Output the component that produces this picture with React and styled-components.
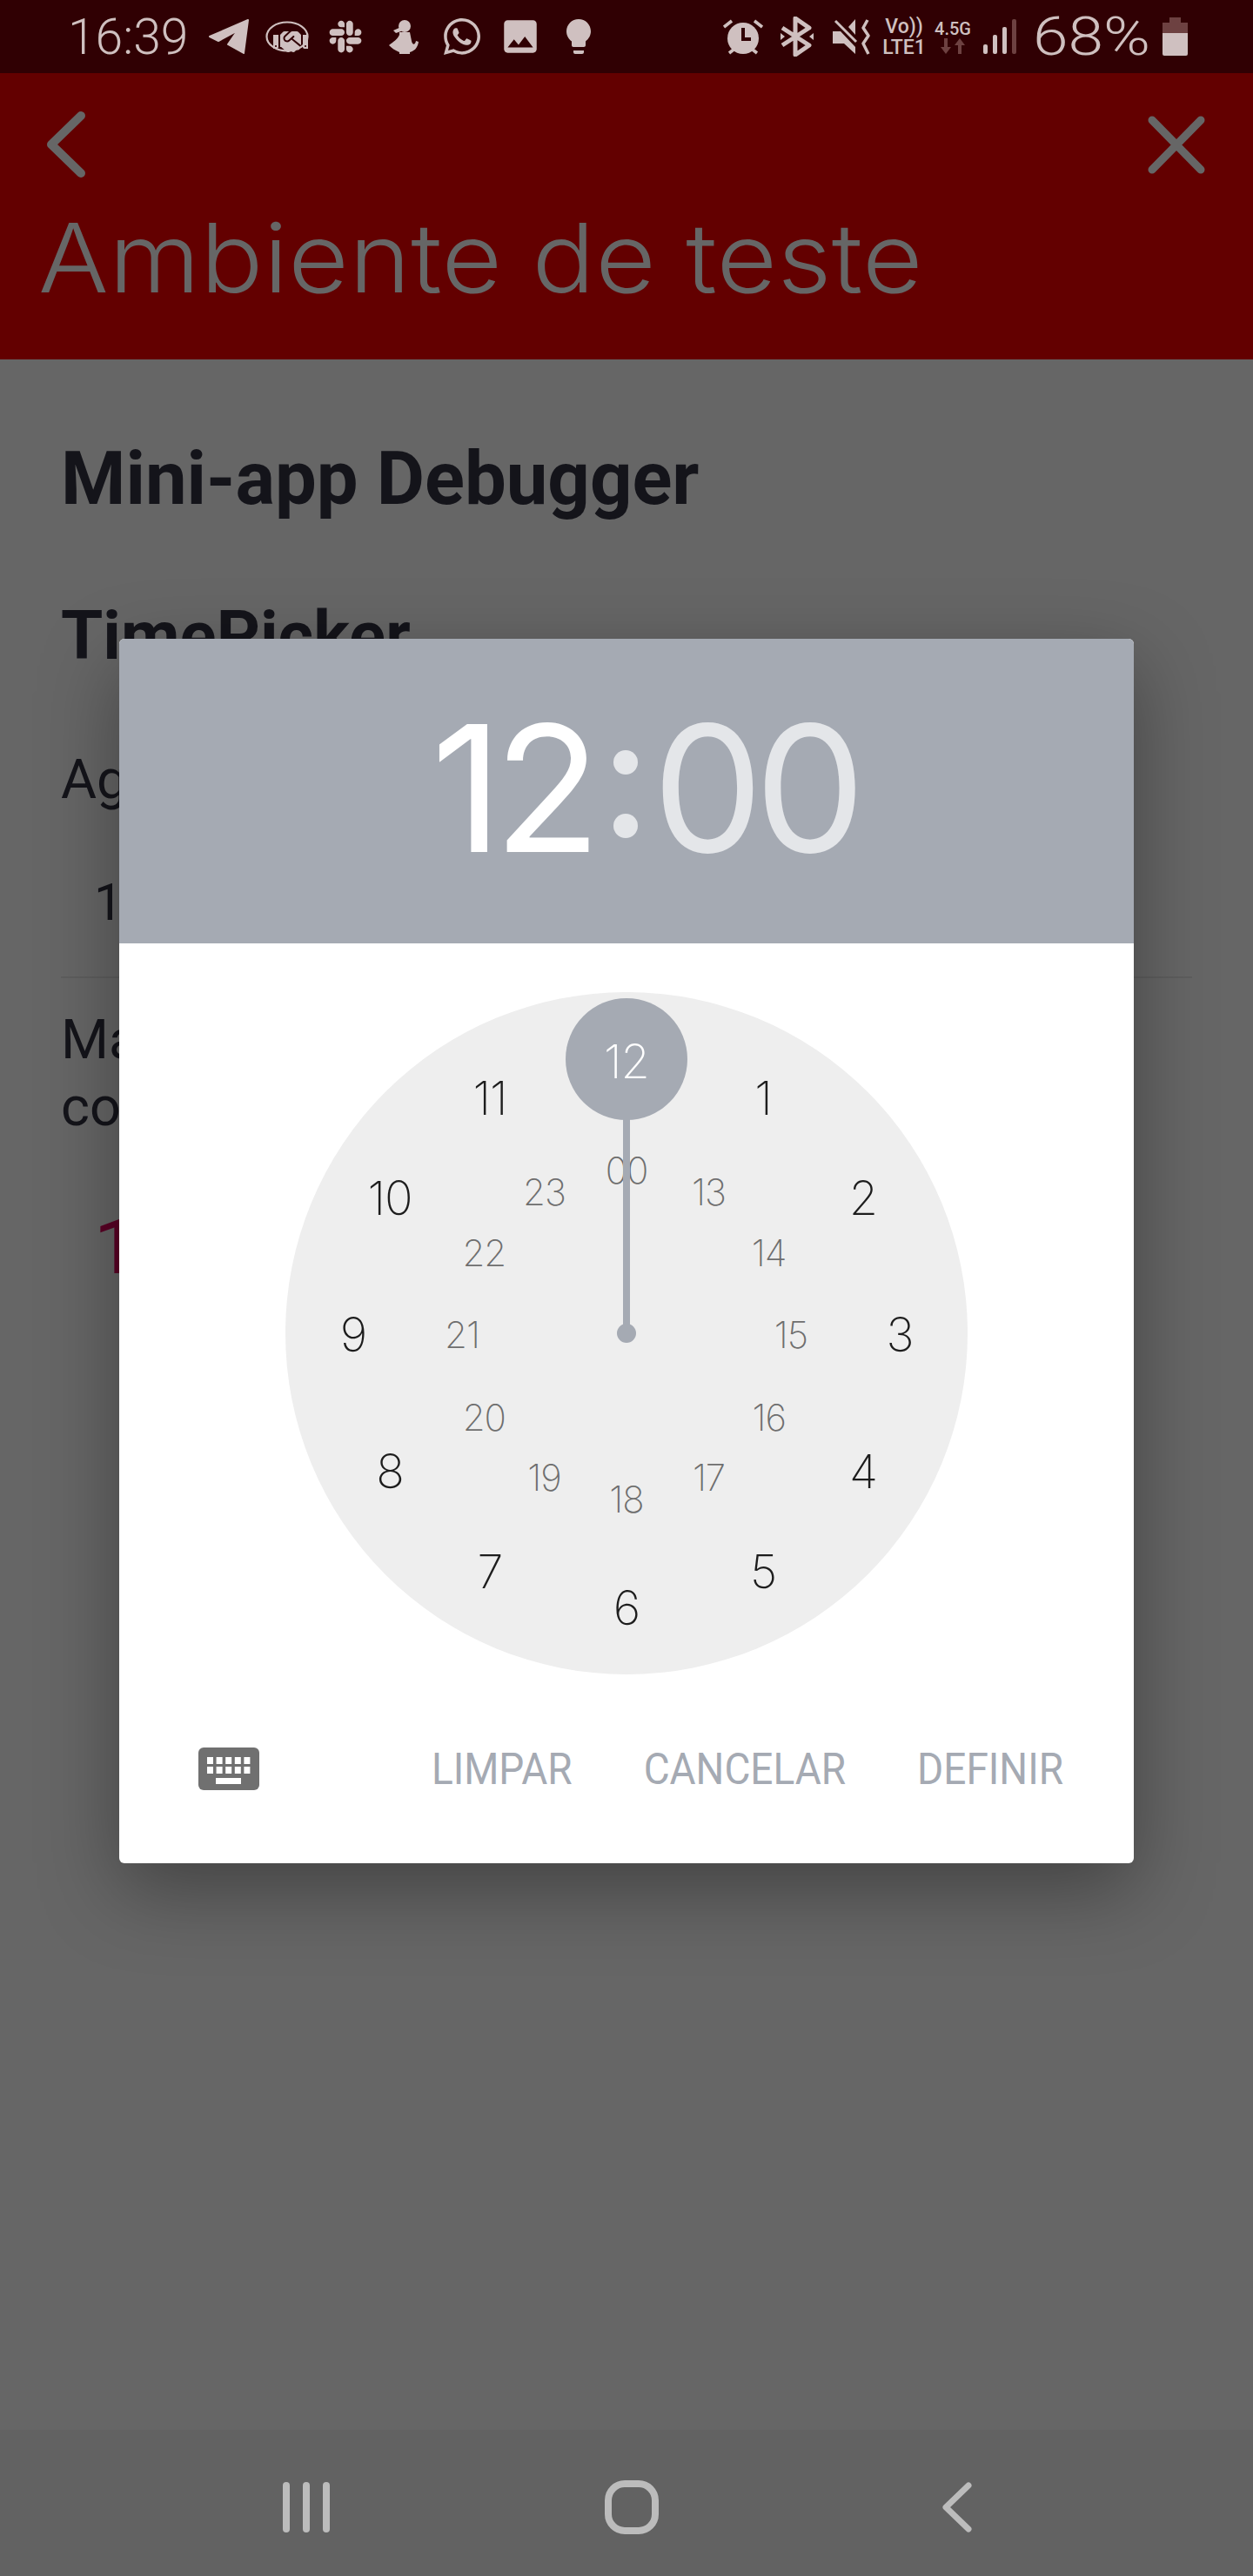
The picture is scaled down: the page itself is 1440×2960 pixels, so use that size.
import React from "react"
import styled, { createGlobalStyle } from "styled-components"
import { FaSlack, FaWhatsapp, FaHandshake } from "react-icons/fa"
import { MdLightbulb, MdPhoto } from "react-icons/md"

const GlobalStyle = createGlobalStyle`
    html, body {
        margin: 0;
        padding: 0;
        background: #666;
    }
    #root {
        width: 1440px;
        height: 2960px;
    }
`

const Screen = styled.div`
    position: relative;
    width: 1440px;
    height: 2960px;
    display: flex;
    flex-direction: column;
    overflow: hidden;
    background: #666666;
    font-family: Roboto, "Liberation Sans", sans-serif;
`

/* status bar */
const StatusBar = styled.div`
    height: 84px;
    flex: none;
    display: flex;
    align-items: center;
    justify-content: space-between;
    padding: 0 75px 0 78px;
    box-sizing: border-box;
    background: #300003;
    color: #cfc0c0;
`
const StatusGroup = styled.div`
    display: flex;
    align-items: center;
`
const Clock = styled.span`
    font-size: 57px;
    font-weight: 300;
    line-height: 1;
    width: 151px;
`
const Slot = styled.div`
    width: ${({ $w }) => $w || 67}px;
    height: 60px;
    display: flex;
    align-items: center;
    justify-content: center;
    font-size: ${({ $size }) => $size || 40}px;
`
const NetStack = styled.div`
    display: flex;
    flex-direction: column;
    align-items: center;
    font-weight: 500;
    line-height: 1;
    font-size: ${({ $size }) => $size}px;
    gap: 1px;
`
const Battery = styled.span`
    font-size: 73px;
    font-weight: 300;
    line-height: 1;
    margin: 0 14px 0 10px;
    transform: scaleY(0.84);
`

/* red title bar */
const TitleBar = styled.header`
    height: 329px;
    flex: none;
    display: flex;
    flex-direction: column;
    padding: 42px 55px 0 44px;
    box-sizing: border-box;
    background: #630000;
    color: #666666;
`
const TitleIcons = styled.div`
    display: flex;
    justify-content: space-between;
    align-items: center;
    padding-left: 8px;
`
const Title = styled.h1`
    margin: 18px 0 0;
    font-family: Inter, Roboto, sans-serif;
    font-size: 120px;
    line-height: 1.2;
    font-weight: 300;
    letter-spacing: 0.4px;
    white-space: nowrap;
    transform: scaleY(0.92);
`

/* page behind the dialog */
const Content = styled.main`
    flex: 1;
    padding: 91px 70px 0;
    color: #14141a;
`
const PageTitle = styled.h2`
    margin: 0;
    font-size: 85px;
    line-height: 92px;
    font-weight: 700;
`
const SectionTitle = styled.h3`
    margin: 89px 0 0;
    font-size: 78px;
    line-height: 92px;
    font-weight: 700;
`
const Label = styled.p`
    margin: 83px 0 0;
    font-size: 63px;
    line-height: 72px;
`
const FieldValue = styled.div`
    margin: 73px 0 0 38px;
    font-size: 59px;
    line-height: 64px;
`
const Divider = styled.hr`
    margin: 53px 0 0;
    border: none;
    height: 2px;
    background: #5e5e5e;
`
const Description = styled.p`
    margin: 32px 0 0;
    font-size: 63px;
    line-height: 77px;
`
const ResultValue = styled.div`
    margin: 73px 0 0 38px;
    font-size: 88px;
    line-height: 100px;
    color: #5b0026;
`

const NavBar = styled.nav`
    height: 168px;
    flex: none;
    display: grid;
    grid-template-columns: repeat(3, 374px);
    align-items: center;
    padding: 10px 0 0 165px;
    background: #626262;
    color: #bcbcbc;
    box-sizing: border-box;
`
const NavItem = styled.div`
    display: flex;
    justify-content: center;
`

/* dialog */
const Backdrop = styled.div`
    position: absolute;
    inset: 0;
    display: flex;
    justify-content: center;
    align-items: flex-start;
    padding-top: 734px;
`
const Dialog = styled.section`
    width: 1166px;
    height: 1407px;
    display: flex;
    flex-direction: column;
    background: #fff;
    border-radius: 6px;
    overflow: hidden;
    box-shadow: 0 30px 90px rgba(0, 0, 0, 0.35);
`
const TimeHeader = styled.div`
    height: 350px;
    flex: none;
    display: flex;
    align-items: center;
    justify-content: center;
    padding: 0 0 6px 40px;
    background: #a5aab3;
    font-family: Inter, Roboto, sans-serif;
    font-size: 202px;
    line-height: 1;
    font-weight: 400;
    letter-spacing: -10px;
    box-sizing: border-box;
`
const TimePart = styled.span`
    color: ${({ $active }) => ($active ? "#ffffff" : "#e4e6e9")};
`
const ColonDots = styled.div`
    display: flex;
    flex-direction: column;
    gap: 45px;
    margin: 12px 17px 0 24px;
`
const ColonDot = styled.span`
    width: 28px;
    height: 28px;
    border-radius: 50%;
    background: #e4e6e9;
`
const ClockArea = styled.div`
    flex: 1;
    display: flex;
    justify-content: center;
    padding-top: 56px;
`
const Disc = styled.div`
    position: relative;
    width: 784px;
    height: 784px;
    border-radius: 50%;
    background: #eeeeee;
    font-family: Inter, Roboto, sans-serif;
`
const Bubble = styled.div`
    position: absolute;
    left: 322px;
    top: 7px;
    width: 140px;
    height: 140px;
    border-radius: 50%;
    background: #a5aab3;
`
const Hand = styled.div`
    position: absolute;
    left: 388px;
    top: 140px;
    width: 8px;
    height: 252px;
    background: #a5aab3;
`
const Pivot = styled.div`
    position: absolute;
    left: 381px;
    top: 381px;
    width: 22px;
    height: 22px;
    border-radius: 50%;
    background: #a5aab3;
`
const Tick = styled.span`
    position: absolute;
    transform: translate(-50%, -46%);
    line-height: 1;
    font-weight: 200;
    letter-spacing: -1px;
    font-size: ${({ $inner }) => ($inner ? 42 : 54)}px;
    color: ${({ $inner, $active }) => ($active ? "#ffffff" : $inner ? "#6e6e6e" : "#1d1d1d")};
`
const Footer = styled.div`
    height: 217px;
    flex: none;
    display: flex;
    align-items: center;
    justify-content: space-between;
    padding: 0 81px 0 91px;
    box-sizing: border-box;
`
const Actions = styled.div`
    display: flex;
    gap: 82px;
`
const ActionButton = styled.button`
    padding: 0;
    border: none;
    background: none;
    font-family: Roboto, sans-serif;
    font-size: 46px;
    font-weight: 400;
    line-height: 1;
    color: #a5aab3;
    transform: scaleY(1.07);
`

const BackIcon = () => (
    <svg width="50" height="80" viewBox="0 0 50 80" fill="none" stroke="currentColor" strokeWidth="10" strokeLinecap="round" strokeLinejoin="round">
        <path d="M41 7 L7 40 L41 73" />
    </svg>
)
const CloseIcon = () => (
    <svg width="66" height="67" viewBox="0 0 66 67" fill="none" stroke="currentColor" strokeWidth="9" strokeLinecap="round">
        <path d="M5 5 L61 62 M61 5 L5 62" />
    </svg>
)
const TelegramIcon = () => (
    <svg width="48" height="42" viewBox="8 12 48 42" fill="currentColor" stroke="currentColor" strokeWidth="2" strokeLinejoin="round">
        <path d="M10 33 L54 14 L49 52 L31 42 L42 26 L20 38 Z" />
    </svg>
)
const HandshakeIcon = () => (
    <svg width="50" height="36" viewBox="0 0 50 36">
        <ellipse cx="25" cy="18" rx="23.5" ry="16.5" fill="none" stroke="currentColor" strokeWidth="2.2" />
        <FaHandshake x="9" y="4" width="32" height="28" fill="currentColor" />
    </svg>
)
const PersonIcon = () => (
    <svg width="36" height="42" viewBox="216 11 36 42" fill="currentColor">
        <circle cx="235" cy="20" r="7" />
        <path d="M222 25 L231 21 L231 26 L225 28 Z" />
        <path d="M229 27 L241 27 L243 37 C244 42 247 42 248 37 L251 38 C250 46 245 49 241 50 V52 H229 V50 C224 48 220 45 217 42 C222 38 227 35 229 30 Z" />
    </svg>
)
const AlarmIcon = () => (
    <svg width="46" height="44" viewBox="8 8 46 44" fill="none" stroke="currentColor" strokeWidth="3.6">
        <circle cx="31" cy="32" r="18" fill="currentColor" stroke="none" />
        <path d="M9 19 L18 12 M53 19 L44 12 M15 49 L20 45 M47 49 L42 45" />
        <path d="M31 20 V33 H40" stroke="#300003" strokeWidth="4" />
    </svg>
)
const BluetoothIcon = () => (
    <svg width="42" height="46" viewBox="73 7 42 46" fill="none" stroke="currentColor" strokeWidth="5" strokeLinejoin="round">
        <path d="M77 20 L108 40 L92 51 V9 L108 20 L77 40" />
        <path d="M75 26 L80 30 L75 34 Z M113 26 L108 30 L113 34 Z" fill="currentColor" stroke="none" />
    </svg>
)
const MuteIcon = () => (
    <svg width="44" height="44" viewBox="132 8 44 44" fill="currentColor">
        <path d="M151 19 L159 10 V28 Z" />
        <path d="M133 24 H142 L159 42 V50 L146 38 H133 Z" />
        <path d="M136 12 L160 36" fill="none" stroke="currentColor" strokeWidth="3" />
        <path d="M173 11 L168 20 L174 29 L168 38 L174 50" fill="none" stroke="currentColor" strokeWidth="3.5" strokeLinejoin="round" />
    </svg>
)
const SignalIcon = () => (
    <svg width="38" height="42" viewBox="0 0 38 42">
        <rect x="0" y="30" width="5" height="11" rx="2" fill="currentColor" />
        <rect x="11" y="19" width="5" height="22" rx="2" fill="currentColor" />
        <rect x="22" y="10" width="5" height="31" rx="2" fill="currentColor" />
        <rect x="33" y="1" width="5" height="40" rx="2" fill="#6d4141" />
    </svg>
)
const ArrowsIcon = () => (
    <svg width="30" height="18" viewBox="0 0 30 18" fill="#6d4141">
        <path d="M5 0 h4 v10 h4 l-6 8 l-6 -8 h4 z" />
        <path d="M21 18 h4 v-10 h4 l-6 -8 l-6 8 h4 z" />
    </svg>
)
const BatteryIcon = () => (
    <svg width="29" height="44" viewBox="0 0 29 44">
        <path d="M8 0 h13 v6 h8 v13 H0 V6 h8 z" fill="#6d4141" />
        <path d="M0 18 h29 v24 a2 2 0 0 1 -2 2 H2 a2 2 0 0 1 -2 -2 z" fill="currentColor" />
    </svg>
)
const KeyboardIcon = () => (
    <svg width="70" height="49" viewBox="0 0 70 49">
        <rect width="70" height="49" rx="6" fill="#707070" />
        {[0, 1].map((row) =>
            [0, 1, 2, 3, 4].map((col) => (
                <rect key={`${row}-${col}`} x={10 + col * 10.6} y={11 + row * 11} width="7" height="8" fill="#fff" />
            ))
        )}
        <rect x="20" y="35" width="29" height="7" fill="#fff" />
    </svg>
)
const RecentsIcon = () => (
    <svg width="54" height="58" viewBox="0 0 54 58" fill="currentColor">
        <rect x="0" y="0" width="8" height="58" rx="4" />
        <rect x="23" y="0" width="8" height="58" rx="4" />
        <rect x="46" y="0" width="8" height="58" rx="4" />
    </svg>
)
const HomeIcon = () => (
    <svg width="62" height="62" viewBox="0 0 62 62" fill="none" stroke="currentColor" strokeWidth="8">
        <rect x="4" y="4" width="54" height="54" rx="19" />
    </svg>
)
const NavBackIcon = () => (
    <svg width="34" height="58" viewBox="0 0 34 58" fill="none" stroke="currentColor" strokeWidth="7" strokeLinecap="round" strokeLinejoin="round">
        <path d="M30 4 L4 29 L30 54" />
    </svg>
)

const OUTER = ["12", "1", "2", "3", "4", "5", "6", "7", "8", "9", "10", "11"]
const INNER = ["00", "13", "14", "15", "16", "17", "18", "19", "20", "21", "22", "23"]
const tickPosition = (index, radius) => {
    const angle = (index * Math.PI) / 6
    return { left: 392 + radius * Math.sin(angle), top: 392 - radius * Math.cos(angle) }
}

export default function App() {
    return (
        <Screen>
            <GlobalStyle />
            <StatusBar>
                <StatusGroup>
                    <Clock>16:39</Clock>
                    <Slot><TelegramIcon /></Slot>
                    <Slot><HandshakeIcon /></Slot>
                    <Slot $size={42}><FaSlack /></Slot>
                    <Slot><PersonIcon /></Slot>
                    <Slot $size={48}><FaWhatsapp /></Slot>
                    <Slot $size={50}><MdPhoto /></Slot>
                    <Slot $size={48}><MdLightbulb /></Slot>
                </StatusGroup>
                <StatusGroup>
                    <Slot $w={62}><AlarmIcon /></Slot>
                    <Slot $w={62}><BluetoothIcon /></Slot>
                    <Slot $w={62}><MuteIcon /></Slot>
                    <Slot $w={60}>
                        <NetStack $size={23}>
                            <span>Vo))</span>
                            <span>LTE1</span>
                        </NetStack>
                    </Slot>
                    <Slot $w={52}>
                        <NetStack $size={20}>
                            <span>4.5G</span>
                            <ArrowsIcon />
                        </NetStack>
                    </Slot>
                    <Slot $w={56}><SignalIcon /></Slot>
                    <Battery>68%</Battery>
                    <BatteryIcon />
                </StatusGroup>
            </StatusBar>

            <TitleBar>
                <TitleIcons>
                    <BackIcon />
                    <CloseIcon />
                </TitleIcons>
                <Title>Ambiente de teste</Title>
            </TitleBar>

            <Content>
                <PageTitle>Mini-app Debugger</PageTitle>
                <SectionTitle>TimePicker</SectionTitle>
                <Label>Agora</Label>
                <FieldValue>12:00</FieldValue>
                <Divider />
                <Description>Mais<br />com</Description>
                <ResultValue>12:00</ResultValue>
            </Content>

            <NavBar>
                <NavItem><RecentsIcon /></NavItem>
                <NavItem><HomeIcon /></NavItem>
                <NavItem><NavBackIcon /></NavItem>
            </NavBar>

            <Backdrop>
                <Dialog>
                    <TimeHeader>
                        <TimePart $active>12</TimePart>
                        <ColonDots>
                            <ColonDot />
                            <ColonDot />
                        </ColonDots>
                        <TimePart>00</TimePart>
                    </TimeHeader>
                    <ClockArea>
                        <Disc>
                            {INNER.map((label, i) => (
                                <Tick key={label} $inner style={tickPosition(i, 189)}>{label}</Tick>
                            ))}
                            <Bubble />
                            <Hand />
                            <Pivot />
                            {OUTER.map((label, i) => (
                                <Tick key={label} $active={i === 0} style={tickPosition(i, 314)}>{label}</Tick>
                            ))}
                        </Disc>
                    </ClockArea>
                    <Footer>
                        <KeyboardIcon />
                        <Actions>
                            <ActionButton>LIMPAR</ActionButton>
                            <ActionButton>CANCELAR</ActionButton>
                            <ActionButton>DEFINIR</ActionButton>
                        </Actions>
                    </Footer>
                </Dialog>
            </Backdrop>
        </Screen>
    )
}
